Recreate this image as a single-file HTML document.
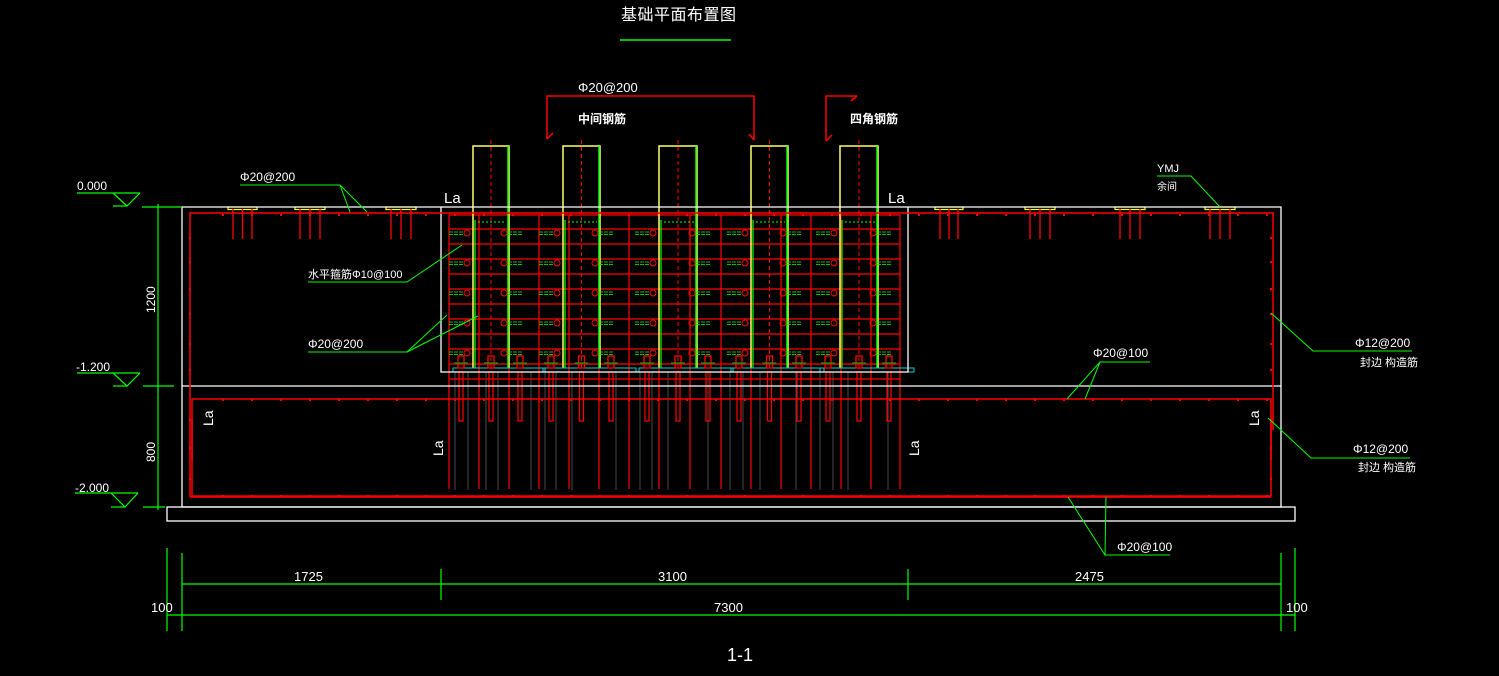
<!DOCTYPE html>
<html><head><meta charset="utf-8"><style>
html,body{margin:0;padding:0;background:#000;width:1499px;height:676px;overflow:hidden}
svg{display:block}
text{font-family:"Liberation Sans","Noto Sans CJK SC",sans-serif;fill:#fff}
</style></head><body>
<svg id="s" width="1499" height="676" viewBox="0 0 1499 676" xmlns="http://www.w3.org/2000/svg">
<g id="g"></g>
<text x="621" y="20" font-size="16" letter-spacing="0.5">基础平面布置图</text>
<line x1="620" y1="40" x2="731" y2="40" stroke="#0f0" stroke-width="1.5"/>
<g stroke="#f00" fill="none" stroke-width="1.5">
<polyline points="547,139 547,96 754,96 754,140"/>
<polyline points="826,141 826,96 857,96"/>
<line x1="547" y1="139" x2="553" y2="133"/><line x1="754" y1="140" x2="749" y2="134"/>
<line x1="826" y1="141" x2="832" y2="135"/><line x1="857" y1="96" x2="851" y2="101"/>
</g>
<text x="578" y="92" font-size="13">Φ20@200</text>
<text x="578" y="123" font-size="12" font-weight="bold">中间钢筋</text>
<text x="850" y="123" font-size="12" font-weight="bold">四角钢筋</text>
<g stroke="#fff" fill="none" stroke-width="1.3">
<polyline points="182,507 182,207 1281,207 1281,507 182,507"/>
<line x1="182" y1="386" x2="1281" y2="386"/>
<polyline points="441,207 441,372 908,372 908,207"/>
<rect x="167" y="507" width="1128" height="14"/>
</g>
<g stroke="#f00" fill="none" stroke-width="1.5">
<polyline points="190,497 190,213 1273,213 1273,430"/>
<rect x="192" y="399" width="1079" height="97"/>
<line x1="190" y1="497" x2="1271" y2="497"/>
<line x1="1271" y1="420" x2="1271" y2="460"/>
<line x1="192" y1="420" x2="192" y2="460"/>
</g>
<g stroke="#0f0" fill="none" stroke-width="1.2">
<line x1="77" y1="193" x2="140" y2="193"/><polyline points="113,193 127,206 140,193"/><line x1="113" y1="206" x2="127" y2="206"/>
<line x1="77" y1="373" x2="140" y2="373"/><polyline points="113,373 127,386 140,373"/><line x1="113" y1="386" x2="127" y2="386"/>
<line x1="75" y1="493" x2="138" y2="493"/><polyline points="111,493 125,507 138,493"/><line x1="111" y1="507" x2="125" y2="507"/>
<line x1="158" y1="204" x2="158" y2="510"/>
<line x1="142" y1="207" x2="182" y2="207"/><line x1="143" y1="386" x2="174" y2="386"/><line x1="143" y1="507" x2="165" y2="507"/>
</g>
<text x="77" y="190" font-size="12">0.000</text>
<text x="76" y="371" font-size="12">-1.200</text>
<text x="75" y="492" font-size="12">-2.000</text>
<text font-size="12" transform="translate(155,313) rotate(-90)">1200</text>
<text font-size="12" transform="translate(155,462) rotate(-90)">800</text>
<g stroke="#0f0" fill="none" stroke-width="1.2">
<line x1="182" y1="584" x2="1281" y2="584"/>
<line x1="167" y1="615" x2="1295" y2="615"/>
<line x1="167" y1="548" x2="167" y2="631"/><line x1="182" y1="553" x2="182" y2="631"/>
<line x1="441" y1="569" x2="441" y2="600"/><line x1="908" y1="569" x2="908" y2="600"/>
<line x1="1281" y1="553" x2="1281" y2="631"/><line x1="1295" y1="548" x2="1295" y2="631"/>
</g>
<text x="294" y="581" font-size="13">1725</text>
<text x="658" y="581" font-size="13">3100</text>
<text x="1075" y="581" font-size="13">2475</text>
<text x="714" y="612" font-size="13">7300</text>
<text x="151" y="612" font-size="13">100</text>
<text x="1286" y="612" font-size="13">100</text>
<text x="727" y="661" font-size="18">1-1</text>
<g stroke="#0f0" fill="none" stroke-width="1">
<polyline points="240,185 340,185 350,212"/><line x1="340" y1="185" x2="367" y2="212"/>
<polyline points="308,282 407,282 462,245"/>
<polyline points="308,352 407,352 447,315"/><line x1="407" y1="352" x2="478" y2="316"/>
<polyline points="1157,176 1191,176 1220,207"/>
<polyline points="1412,351 1313,351 1271,313"/>
<polyline points="1410,458 1311,458 1268,418"/>
<polyline points="1150,362 1100,362 1067,399"/><line x1="1100" y1="362" x2="1085" y2="399"/>
<polyline points="1170,555 1105,555 1068,497"/><line x1="1105" y1="555" x2="1106" y2="497"/>
</g>
<text x="240" y="181" font-size="12">Φ20@200</text>
<text x="308" y="278" font-size="11">水平箍筋Φ10@100</text>
<text x="308" y="348" font-size="12">Φ20@200</text>
<text x="1157" y="172" font-size="11">YMJ</text>
<text x="1157" y="190" font-size="10">余间</text>
<text x="1355" y="347" font-size="12">Φ12@200</text>
<text x="1360" y="366" font-size="11">封边 构造筋</text>
<text x="1353" y="453" font-size="12">Φ12@200</text>
<text x="1358" y="471" font-size="11">封边 构造筋</text>
<text x="1093" y="357" font-size="12">Φ20@100</text>
<text x="1117" y="551" font-size="12">Φ20@100</text>
<text x="444" y="203" font-size="15">La</text>
<text x="888" y="203" font-size="15">La</text>
<text font-size="14" transform="translate(213,426) rotate(-90)">La</text>
<text font-size="14" transform="translate(443,456) rotate(-90)">La</text>
<text font-size="14" transform="translate(919,456) rotate(-90)">La</text>
<text font-size="14" transform="translate(1259,426) rotate(-90)">La</text>
</svg>
<script>
var g=document.getElementById('g'),h='';
function L(a,b,c,d,col,w,extra){h+='<line x1="'+a+'" y1="'+b+'" x2="'+c+'" y2="'+d+'" stroke="'+col+'" stroke-width="'+(w||1)+'" '+(extra||'')+'/>';}
function R(x,y,w,hh,col,sw){h+='<rect x="'+x+'" y="'+y+'" width="'+w+'" height="'+hh+'" fill="none" stroke="'+col+'" stroke-width="'+(sw||1)+'"/>';}
[455,468,486,498,531,545,556,572,616,640,652,668,708,730,743,760,796,820,833,848,888].forEach(function(x){L(x,372,x,490,'#666',0.7);});
var ys=[215,229,244,259,274,289,304,319,334,349,364,379];
ys.forEach(function(y){L(449,y,900,y,'#f00',1.2);});
var xs=[449,479,509,539,569,599,629,659,690,721,751,781,811,841,871,900];
xs.forEach(function(x){L(x,215,x,489,'#f00',1.2);});
[[228,257],[295,325],[386,416],[935,963],[1025,1055],[1115,1145],[1205,1235]].forEach(function(p){
 h+='<rect x="'+p[0]+'" y="207" width="'+(p[1]-p[0])+'" height="2.5" fill="none" stroke="#ff0" stroke-width="1.2"/>';
 var m=(p[0]+p[1])/2;[p[0]+5,m,p[1]-5].forEach(function(x){L(x,209,x,239,'#f00',1.3);});
});
for(var x=222;x<1270;x+=29){h+='<rect x="'+x+'" y="214" width="2" height="2" fill="#f00"/><rect x="'+x+'" y="399" width="2" height="2" fill="#f00"/><rect x="'+x+'" y="495" width="2" height="2" fill="#f00"/>';}
var cols=[[473,509],[563,600],[659,697],[751,788],[840,878]];
cols.forEach(function(c){
 var m=(c[0]+c[1])/2;
 h+='<polyline points="'+c[0]+',368 '+c[0]+',146 '+c[1]+',146 '+c[1]+',368" fill="none" stroke="#ff6" stroke-width="1.5"/>';
 L(c[0]+2,220,c[0]+2,368,'#0f0',1.2);L(c[1]-1,146,c[1]-1,368,'#0f0',1.5);
 L(m,140,m,372,'#f00',1,'stroke-dasharray="4,3"');
 L(c[0]+5,222,c[1]-3,222,'#0f0',1,'stroke-dasharray="2,2"');
 var bx=[c[0]-12,m,c[1]+11];
 h+='<rect x="'+(c[0]-20)+'" y="368" width="'+(c[1]-c[0]+56)+'" height="4" fill="none" stroke="#1cc" stroke-width="1"/>';
 bx.forEach(function(x){R(x-3,356,6,12,'#f00',1.3);R(x-2,372,4,49,'#f00',1.2);L(x-7,363,x+7,363,'#0a0',1.2);});
 [233,263,293,323,353].forEach(function(y){
  [c[0]-6,c[1]-5].forEach(function(x){h+='<circle cx="'+x+'" cy="'+y+'" r="3" fill="none" stroke="#f00" stroke-width="1"/>';});
  L(c[0]-24,y-1,c[0]-10,y-1,'#0f0',0.8,'stroke-dasharray="4,1"');L(c[0]-24,y+1.5,c[0]-10,y+1.5,'#0f0',0.8,'stroke-dasharray="4,1"');
  L(c[1]-1,y-1,c[1]+13,y-1,'#0f0',0.8,'stroke-dasharray="4,1"');L(c[1]-1,y+1.5,c[1]+13,y+1.5,'#0f0',0.8,'stroke-dasharray="4,1"');
 });
});
[237,261,288,313,343,369,419,447,478].forEach(function(y){h+='<rect x="1270" y="'+y+'" width="2" height="2" fill="#f00"/><rect x="189" y="'+y+'" width="2" height="2" fill="#f00"/>';});
g.innerHTML=h;
</script>
</body></html>
